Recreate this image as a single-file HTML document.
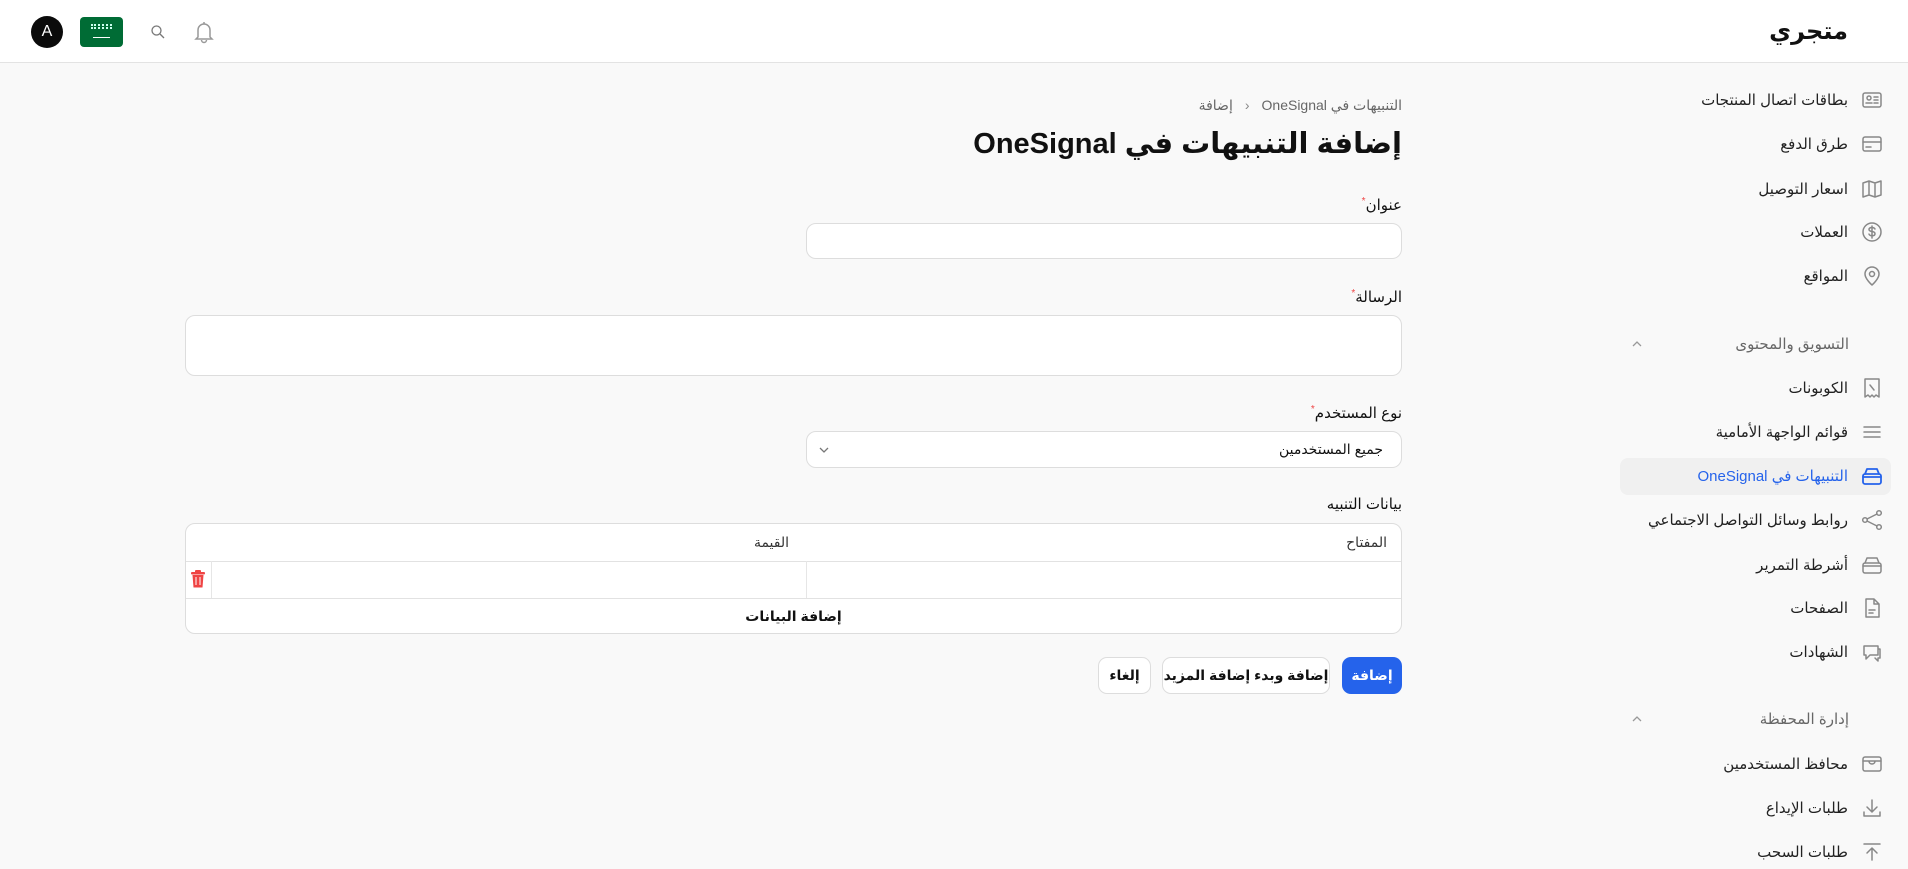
<!DOCTYPE html>
<html><head><meta charset="utf-8"><style>
*{box-sizing:border-box;margin:0;padding:0}
body{width:1908px;height:860px;overflow:hidden;background:#f9f9f9;font-family:"Liberation Sans","DejaVu Sans",sans-serif;color:#111;position:relative}
.a{position:absolute}
.hdr{left:0;top:0;width:1908px;height:63px;background:#fff;border-bottom:1px solid #e3e3e3}
.r{direction:rtl;white-space:nowrap}
.item{position:absolute;right:60px;font-size:15px;color:#222;direction:rtl;white-space:nowrap;transform:translateY(-50%)}
.ic{position:absolute;left:1860px;width:24px;height:24px;transform:translateY(-50%)}
.ic svg{width:24px;height:24px;fill:none;stroke:#888;stroke-width:1.5;stroke-linecap:round;stroke-linejoin:round}
.sec{position:absolute;right:59px;font-size:15px;color:#666;direction:rtl;transform:translateY(-50%)}
.chev{position:absolute;left:1631px;width:12px;height:12px;transform:translateY(-50%)}
.lbl{position:absolute;right:506px;font-size:15px;color:#111;direction:rtl;transform:translateY(-50%)}
.lbl i{color:#ef4444;font-style:normal;font-size:10px;vertical-align:top}
.box{position:absolute;background:#fff;border:1px solid #ddd;border-radius:10px}
.btn{position:absolute;top:657px;height:37px;border-radius:9px;font-size:14px;font-weight:bold;display:flex;align-items:center;justify-content:center;direction:rtl}
</style></head><body>
<div class="a hdr"></div>
<div class="a" style="left:31px;top:16px;width:32px;height:32px;border-radius:50%;background:#0b0b0b;color:#fff;font-size:16px;display:flex;align-items:center;justify-content:center">A</div>
<div class="a" style="left:80px;top:17px;width:43px;height:30px;border-radius:4px;background:#006c35">
<div class="a" style="left:11px;top:7px;width:21px;height:5px;border-top:2px dotted #cfe;border-bottom:2px dotted #cfe"></div>
<div class="a" style="left:13px;top:20px;width:17px;height:1px;background:#fff"></div></div>
<svg class="a" style="left:150px;top:24px" width="16" height="16" viewBox="0 0 16 16" fill="none" stroke="#777" stroke-width="1.3"><circle cx="6.5" cy="6.5" r="4.5"/><path d="M10 10l4 4"/></svg>
<svg class="a" style="left:193px;top:20px" width="22" height="24" viewBox="0 0 22 24" fill="none" stroke="#999" stroke-width="1.5"><path d="M5 17V10a6 6 0 0112 0v7l2 2H3z"/><path d="M8.5 20a2.5 2.5 0 005 0"/><path d="M11 2v2"/></svg>
<div class="a r" style="right:60px;top:17px;font-size:24px;font-weight:bold">متجري</div>

<!-- sidebar -->
<div class="a" style="left:1620px;top:458px;width:271px;height:37px;background:#f0f0f0;border-radius:8px"></div>
<div class="ic" style="top:100px"><svg viewBox="0 0 24 24"><rect x="3" y="5" width="18" height="14" rx="2"/><circle cx="9" cy="10" r="2"/><path d="M6 15h6M14 9h4M14 12h4M14 15h4"/></svg></div>
<div class="item" style="top:100px">بطاقات اتصال المنتجات</div>
<div class="ic" style="top:144px"><svg viewBox="0 0 24 24"><rect x="3" y="5" width="18" height="14" rx="2"/><path d="M3 10h18M6 15h5"/></svg></div>
<div class="item" style="top:144px">طرق الدفع</div>
<div class="ic" style="top:189px"><svg viewBox="0 0 24 24"><path d="M3 6l6-2 6 2 6-2v14l-6 2-6-2-6 2z M9 4v14M15 6v14"/></svg></div>
<div class="item" style="top:189px">اسعار التوصيل</div>
<div class="ic" style="top:232px"><svg viewBox="0 0 24 24"><circle cx="12" cy="12" r="9"/><path d="M15 9c-.5-1-1.5-1.5-3-1.5-1.8 0-3 .8-3 2s1 1.7 3 2 3 1 3 2.2-1.2 2-3 2c-1.5 0-2.6-.6-3-1.6M12 6v12"/></svg></div>
<div class="item" style="top:232px">العملات</div>
<div class="ic" style="top:276px"><svg viewBox="0 0 24 24"><path d="M12 21s-7-6-7-11a7 7 0 0114 0c0 5-7 11-7 11z"/><circle cx="12" cy="10" r="2.5"/></svg></div>
<div class="item" style="top:276px">المواقع</div>
<div class="sec" style="top:344px">التسويق والمحتوى</div>
<svg class="chev" style="top:344px" viewBox="0 0 12 12" fill="none" stroke="#999" stroke-width="1.3"><path d="M2 8l4-4 4 4"/></svg>
<div class="ic" style="top:388px"><svg viewBox="0 0 24 24"><path d="M5 3h14v18l-3-2-2 2-2-2-2 2-2-2-3 2z"/><path d="M10 9l4 5"/></svg></div>
<div class="item" style="top:388px">الكوبونات</div>
<div class="ic" style="top:432px"><svg viewBox="0 0 24 24"><path d="M4 7h16M4 12h16M4 17h16"/></svg></div>
<div class="item" style="top:432px">قوائم الواجهة الأمامية</div>
<div class="ic" style="top:476px"><svg viewBox="0 0 24 24" style="stroke:#2563eb;stroke-width:1.8"><rect x="3" y="10" width="18" height="10" rx="2"/><path d="M5 10l2-5h10l2 5M3 13h18"/></svg></div>
<div class="item" style="top:476px;color:#2563eb">التنبيهات في OneSignal</div>
<div class="ic" style="top:520px"><svg viewBox="0 0 24 24"><circle cx="5" cy="12" r="2.3"/><circle cx="19" cy="5" r="2.3"/><circle cx="19" cy="19" r="2.3"/><path d="M7 11l10-5M7 13l10 5"/></svg></div>
<div class="item" style="top:520px">روابط وسائل التواصل الاجتماعي</div>
<div class="ic" style="top:565px"><svg viewBox="0 0 24 24"><rect x="3" y="10" width="18" height="10" rx="2"/><path d="M5 10l2-5h10l2 5M3 13h18"/></svg></div>
<div class="item" style="top:565px">أشرطة التمرير</div>
<div class="ic" style="top:608px"><svg viewBox="0 0 24 24"><path d="M6 3h8l5 5v13H6z M14 3v5h5M9 14h6M9 17h4"/></svg></div>
<div class="item" style="top:608px">الصفحات</div>
<div class="ic" style="top:652px"><svg viewBox="0 0 24 24"><path d="M4 6h14v9H10l-4 4v-4H4z M18 9h2v9h-2v3l-3-3"/></svg></div>
<div class="item" style="top:652px">الشهادات</div>
<div class="sec" style="top:719px">إدارة المحفظة</div>
<svg class="chev" style="top:719px" viewBox="0 0 12 12" fill="none" stroke="#999" stroke-width="1.3"><path d="M2 8l4-4 4 4"/></svg>
<div class="ic" style="top:764px"><svg viewBox="0 0 24 24"><rect x="3" y="5" width="18" height="14" rx="2"/><path d="M3 9h18M15 9c0 2-1.5 3-3 3s-3-1-3-3"/></svg></div>
<div class="item" style="top:764px">محافظ المستخدمين</div>
<div class="ic" style="top:808px"><svg viewBox="0 0 24 24"><path d="M12 4v12M7 11l5 5 5-5M4 16v4h16v-4"/></svg></div>
<div class="item" style="top:808px">طلبات الإيداع</div>
<div class="ic" style="top:852px"><svg viewBox="0 0 24 24"><path d="M12 20V8M7 13l5-5 5 5M4 4h16"/></svg></div>
<div class="item" style="top:852px">طلبات السحب</div>

<!-- main -->
<div class="a r" style="right:506px;top:97px;font-size:14px;color:#666">التنبيهات في OneSignal<span style="margin:0 12px;color:#888">‹</span>إضافة</div>
<div class="a r" style="right:506px;top:126px;font-size:29px;font-weight:bold">إضافة التنبيهات في OneSignal</div>

<div class="lbl" style="top:205px">عنوان<i>*</i></div>
<div class="box" style="left:806px;top:223px;width:596px;height:36px"></div>
<div class="lbl" style="top:297px">الرسالة<i>*</i></div>
<div class="box" style="left:185px;top:315px;width:1217px;height:61px"></div>
<div class="lbl" style="top:413px">نوع المستخدم<i>*</i></div>
<div class="box" style="left:806px;top:431px;width:596px;height:37px"></div>
<div class="a r" style="right:525px;top:441px;font-size:14px">جميع المستخدمين</div>
<svg class="a" style="left:818px;top:444px" width="12" height="12" viewBox="0 0 12 12" fill="none" stroke="#777" stroke-width="1.3"><path d="M2 4l4 4 4-4"/></svg>
<div class="lbl" style="top:504px">بيانات التنبيه</div>

<div class="box" style="left:185px;top:523px;width:1217px;height:111px;overflow:hidden">
<div class="a" style="left:0;top:37px;width:100%;height:1px;background:#e2e2e2"></div>
<div class="a" style="left:0;top:74px;width:100%;height:1px;background:#e2e2e2"></div>
<div class="a" style="left:620px;top:37px;width:1px;height:37px;background:#e6e6e6"></div>
<div class="a" style="left:25px;top:37px;width:1px;height:37px;background:#e6e6e6"></div>
<div class="a r" style="right:14px;top:10px;font-size:14px;color:#333">المفتاح</div>
<div class="a r" style="right:612px;top:10px;font-size:14px;color:#333">القيمة</div>
<svg class="a" style="left:4px;top:46px" width="16" height="18" viewBox="0 0 16 18" fill="#ef4444"><rect x="5" y="0" width="6" height="3" rx="1"/><rect x="1" y="2" width="14" height="2.5" rx="1"/><path d="M2.5 5h11l-1 12.5h-9z"/><path d="M6 7v8M10 7v8" stroke="#fff" stroke-width="1"/></svg>
<div class="a r" style="left:0;width:100%;top:84px;text-align:center;font-size:14px;font-weight:bold">إضافة البيانات</div>
</div>

<div class="btn" style="left:1342px;width:60px;background:#2563eb;color:#fff">إضافة</div>
<div class="btn" style="left:1162px;width:168px;background:#fff;border:1px solid #ddd">إضافة وبدء إضافة المزيد</div>
<div class="btn" style="left:1098px;width:53px;background:#fff;border:1px solid #ddd">إلغاء</div>
</body></html>
